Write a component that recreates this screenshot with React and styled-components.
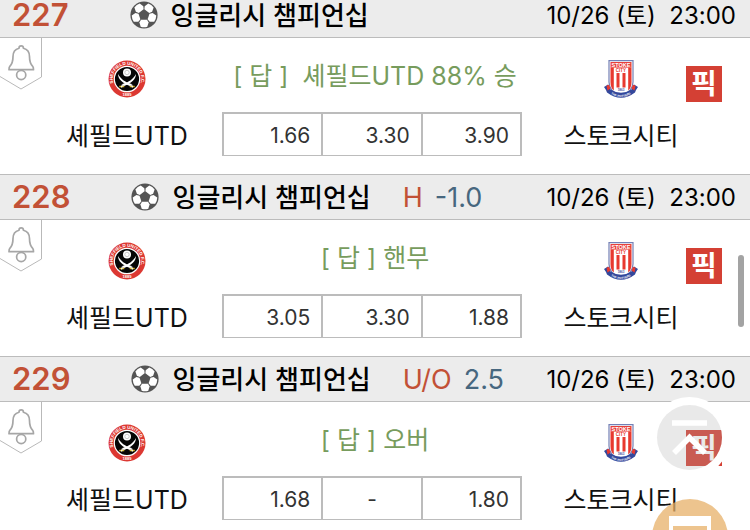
import { useState } from "react";
import styled, { createGlobalStyle } from "styled-components";

const matches = [
  {
    id: 227,
    answer: "[ 답 ]\u00a0 셰필드UTD 88% 승",
    odds: ["1.66", "3.30", "3.90"],
  },
  {
    id: 228,
    type: "H",
    line: "-1.0",
    answer: "[ 답 ] 핸무",
    odds: ["3.05", "3.30", "1.88"],
  },
  {
    id: 229,
    type: "U/O",
    line: "2.5",
    answer: "[ 답 ] 오버",
    odds: ["1.68", "-", "1.80"],
  },
];

export default function App() {
  return (
    <Screen>
      <GlobalStyle />
      <MatchList>
        {matches.map((match) => (
          <Match key={match.id} match={match} />
        ))}
      </MatchList>

      <ScrollThumb />
      <TopButton aria-label="맨 위로">
        <TopIcon />
      </TopButton>
      <MemoButton aria-label="메모">
        <MemoIcon />
      </MemoButton>
    </Screen>
  );
}

function Match({ match }) {
  const [alarm, setAlarm] = useState(false);

  return (
    <article>
      <MatchHeader>
        <Number>{match.id}</Number>
        <BallIcon />
        <League>잉글리시 챔피언십</League>
        {match.type && (
          <Handicap>
            <HandicapType>{match.type}</HandicapType>
            {match.line}
          </Handicap>
        )}
        <Kickoff>10/26 (토)&nbsp; 23:00</Kickoff>
      </MatchHeader>

      <MatchBody>
        <AlarmButton
          aria-label="알림"
          aria-pressed={alarm}
          onClick={() => setAlarm(!alarm)}
        >
          <BellTab />
        </AlarmButton>
        <Team>
          <SheffieldCrest id={match.id} />
          <span>셰필드UTD</span>
        </Team>
        <Middle>
          <Answer>{match.answer}</Answer>
          <OddsTable>
            <tbody>
              <tr>
                {match.odds.map((odd, idx) => (
                  <Odd key={idx} $empty={odd === "-"}>
                    {odd}
                  </Odd>
                ))}
              </tr>
            </tbody>
          </OddsTable>
        </Middle>
        <Team>
          <StokeCrest id={match.id} />
          <span>스토크시티</span>
        </Team>
        <PickButton>픽</PickButton>
      </MatchBody>
    </article>
  );
}

function BallIcon() {
  return (
    <Ball viewBox="0 0 28 28" aria-hidden="true">
      <circle cx="14" cy="14" r="13.6" fill="#545454" />
      <g fill="#fff">
        {[0, 72, 144, 216, 288].map((angle) => (
          <path
            key={angle}
            transform={`rotate(${angle} 14 14)`}
            d="M11 18.8h6l1.6 2.7-1.3 4.3q-3.3 1-6.6 0L9.4 21.5z"
          />
        ))}
      </g>
    </Ball>
  );
}

function BellTab() {
  return (
    <svg width="42" height="53" viewBox="0 0 42 53" fill="none">
      <path d="M41.5 0v39L21 51 0 38.5" stroke="#b9b9b9" />
      <g stroke="#a6a6a6" strokeWidth="1.7" strokeLinejoin="round">
        <path d="M19 10.2c0-3 4.4-3 4.4 0 4 1 6.1 4.3 6.1 8.3 0 5 .8 7.5 3.2 9.8.8.8.8 1.5.8 3.4H9c0-1.9 0-2.6.8-3.4 2.4-2.3 3.2-4.8 3.2-9.8 0-4 2-7.3 6-8.3z" />
        <circle cx="21.2" cy="37" r="4.6" />
      </g>
    </svg>
  );
}

function SheffieldCrest({ id }) {
  return (
    <svg width="38" height="38" viewBox="0 0 38 38" aria-hidden="true">
      <defs>
        <path id={`sheffield-${id}`} d="M5.7 24A14.2 14.2 0 1 1 32.3 24" />
      </defs>
      <circle cx="19" cy="19" r="18.5" fill="#dc3832" />
      <circle cx="19" cy="19" r="12.7" fill="#060606" stroke="#fff" strokeWidth="1.2" />
      <text fill="#fff" fontSize="4.5" fontWeight="700" fontFamily="Liberation Sans, sans-serif">
        <textPath href={`#sheffield-${id}`} startOffset="50%" textAnchor="middle">
          SHEFFIELD UNITED F.C.
        </textPath>
      </text>
      <text
        x="19"
        y="36"
        fill="#fff"
        fontSize="4"
        fontWeight="700"
        textAnchor="middle"
        fontFamily="Liberation Sans, sans-serif"
      >
        1889
      </text>
      <circle cx="19" cy="12.5" r="4" fill="#fff" />
      <circle cx="19" cy="12.5" r="2.2" fill="none" stroke="#aaa" strokeWidth=".6" />
      <path d="M10 14c0 5 4 9 12.5 12.3l1.2-2.3C17 22.5 12.5 18.5 10 14z" fill="#fff" />
      <path d="M28 14c0 5-4 9-12.5 12.3L14.3 24C21 22.5 25.5 18.5 28 14z" fill="#fff" />
      <path d="M11.3 26.5h5M21.7 26.5h5" stroke="#d9b92e" strokeWidth="1.6" />
      <path d="M14.5 24.5l-1 3M23.5 24.5l1 3" stroke="#fff" strokeWidth="1.2" />
    </svg>
  );
}

function StokeCrest({ id }) {
  return (
    <svg width="38" height="38" viewBox="0 0 38 38" aria-hidden="true">
      <defs>
        <path id={`stoke-${id}`} d="M6 31.8Q19 42.3 32 31.8" />
      </defs>
      <path
        d="M7 .7h24v21.3c0 8-5 11.5-12 14-7-2.5-12-6-12-14z"
        fill="#fff"
        stroke="#7480b5"
        strokeWidth="1.2"
      />
      <path d="M8.5 2h21v5.6h-21z" fill="#e8403a" />
      <g fill="#e8392f">
        <path d="M8.5 7.5h3.3V30.5c-2.3-2-3.3-4.5-3.3-8.5zM29.5 7.5h-3.3V30.5c2.3-2 3.3-4.5 3.3-8.5z" />
        <path d="M14.5 13h3v14.5h-3zM20.5 13h3v14.5h-3z" />
      </g>
      <g fontFamily="Liberation Sans, sans-serif" fontWeight="700" textAnchor="middle">
        <text x="19" y="6.7" fontSize="5.5" fill="#fff">
          STOKE
        </text>
        <text x="19" y="11.8" fontSize="4.5" fill="#e8392f">
          CITY
        </text>
        <text x="19" y="30.5" fontSize="3" fill="#3e4f9b">
          1863
        </text>
      </g>
      <path
        d="M2 27l4-2.5 2.5 5Q19 36 29.5 29.5L32 24.5 36 27l-2 3-1 2.5Q19 43 5 32.5L4 30z"
        fill="#33489c"
      />
      <path d="M4.5 25.8l2.5-1 1.5 3.7-3 2zM33.5 25.8l-2.5-1-1.5 3.7 3 2z" fill="#e8392f" />
      <text fill="#fff" fontSize="3" fontWeight="700" fontFamily="Liberation Sans, sans-serif">
        <textPath href={`#stoke-${id}`} startOffset="50%" textAnchor="middle">
          THE POTTERS
        </textPath>
      </text>
    </svg>
  );
}

function TopIcon() {
  return (
    <svg width="65" height="65" viewBox="0 0 65 65" fill="none">
      <path d="M15 18h35M17 48l15.5-15.5L48 48" stroke="#fff" strokeWidth="5.6" />
    </svg>
  );
}

function MemoIcon() {
  return (
    <svg width="76" height="76" viewBox="0 0 76 76" fill="none">
      <path d="M17 17h42v42H17zM21 27v28h34V27z" fill="#fff" fillRule="evenodd" />
    </svg>
  );
}

const GlobalStyle = createGlobalStyle`
  * {
    box-sizing: border-box;
  }

  body {
    margin: 0;
    background-color: #fff;
    color: #111;
    font-family: Inter, "Noto Sans CJK KR", sans-serif;
  }

  button {
    font-family: inherit;
    border: none;
    padding: 0;
    cursor: pointer;
  }

  svg {
    display: block;
    flex-shrink: 0;
  }
`;

const Screen = styled.main`
  height: 100vh;
  overflow: hidden;
`;

/* list is scrolled a little past its first header */
const MatchList = styled.div`
  margin-top: -8px;
`;

const MatchHeader = styled.header`
  display: flex;
  align-items: center;
  height: 46px;
  padding: 0 14px 0 12px;
  background-color: #ececec;
  border-top: 1px solid #bcbcbc;
  border-bottom: 1px solid #bcbcbc;
  white-space: nowrap;
`;

const Number = styled.span`
  margin-right: 61px;
  font-size: 31px;
  font-weight: 600;
  line-height: 32px;
  color: #c25136;
`;

const Ball = styled.svg`
  width: 28px;
  height: 28px;
  margin-right: 13px;
`;

const League = styled.h2`
  margin: 0;
  padding-top: 2px;
  font-size: 26px;
  font-weight: 500;
  line-height: 32px;
  color: #000;
`;

const Handicap = styled.span`
  margin-left: 32px;
  padding-top: 2px;
  font-size: 27px;
  line-height: 32px;
  color: #47677f;
`;

const HandicapType = styled.span`
  margin-right: 12px;
  color: #c25136;
`;

const Kickoff = styled.time`
  margin-left: auto;
  padding-top: 2px;
  font-size: 24px;
  line-height: 32px;
  color: #000;
`;

const MatchBody = styled.div`
  display: grid;
  grid-template-columns: 42px 170fr 344fr 130fr 36px;
  height: 136px;
  padding-right: 28px;
`;

const AlarmButton = styled.button`
  align-self: start;
  background-color: transparent;
`;

const Team = styled.div`
  display: flex;
  flex-direction: column;
  align-items: center;
  gap: 22px;
  padding-top: 22px;
  font-size: 25px;
  line-height: 32px;
  white-space: nowrap;
`;

const Middle = styled.div`
  padding: 20px 34px 0 10px;
`;

const Answer = styled.p`
  margin: 0 0 18px;
  padding-left: 6px;
  font-size: 25px;
  line-height: 36px;
  text-align: center;
  white-space: nowrap;
  color: #779c5d;
`;

const OddsTable = styled.table`
  width: 100%;
  table-layout: fixed;
  border-collapse: collapse;
`;

const Odd = styled.td`
  height: 42px;
  padding: 2px 11px 0;
  border: 2px solid #bcbcbc;
  border-bottom-width: 1px;
  font-size: 21px;
  color: #333;
  text-align: ${(props) => (props.$empty ? "center" : "right")};
`;

const PickButton = styled.button`
  height: 36px;
  margin-top: 28px;
  background-color: #d44034;
  color: #fff;
  font-size: 28px;
  font-weight: 700;
  line-height: 34px;
`;

const ScrollThumb = styled.div`
  position: fixed;
  top: 255px;
  right: 6px;
  width: 6px;
  height: 72px;
  border-radius: 3px;
  background-color: #a3a3a3;
`;

const TopButton = styled.button`
  position: fixed;
  right: 28px;
  bottom: 60px;
  width: 65px;
  height: 65px;
  border-radius: 50%;
  background-color: rgba(170, 170, 170, 0.26);
  box-shadow: 0 0 0 8px #fff;
`;

const MemoButton = styled.button`
  position: fixed;
  right: 22px;
  bottom: -45px;
  width: 76px;
  height: 76px;
  border-radius: 50%;
  background-color: rgba(231, 176, 104, 0.75);
`;
